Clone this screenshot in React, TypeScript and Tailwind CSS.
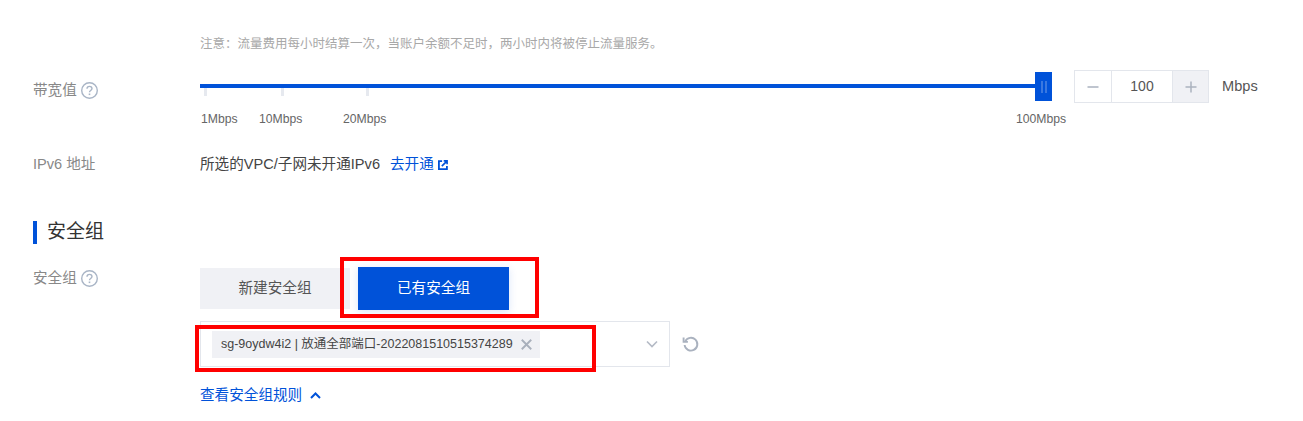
import React from "react";

const font = { fontFamily: '"Liberation Sans", "Noto Sans CJK SC", sans-serif' };

function Help() {
  return (
    <svg width="17" height="17" viewBox="0 0 17 17" fill="none" className="ml-[4px] shrink-0">
      <circle cx="8.5" cy="8.5" r="7.8" stroke="#a9b5c6" strokeWidth="1.4" />
      <path d="M6 6.8c0-1.5 1.1-2.4 2.5-2.4s2.5.9 2.5 2.2c0 1.9-2.5 1.8-2.5 3.6" stroke="#a9b5c6" strokeWidth="1.4" />
      <rect x="7.7" y="11.5" width="1.6" height="1.6" fill="#a9b5c6" />
    </svg>
  );
}

function Tick({ left }: { left: string }) {
  return <div className={`absolute top-[4px] h-[8px] w-[3px] bg-[#e6e9ef] ${left}`} />;
}

export default function App() {
  return (
    <div style={font} className="relative h-[421px] w-[1303px] overflow-hidden bg-white pl-[33px] text-[14.6px] text-[#444]">
      <div className="pl-[167px] pt-[36px] text-[12.5px] leading-[16px] text-[#a8a8a8]">
        注意：流量费用每小时结算一次，当账户余额不足时，两小时内将被停止流量服务。
      </div>

      <div className="mt-[18px] flex h-[62px]">
        <div className="flex h-[32px] w-[167px] items-center pt-[9px] text-[#888]">
          带宽值
          <Help />
        </div>
        <div className="flex items-start">
          <div className="w-[852px]">
            <div className="relative h-[32px]">
              <div className="absolute left-0 top-[14px] h-[4px] w-[843px] bg-[#0052d9]" />
              <div className="absolute left-[835px] top-[2px] flex h-[29px] w-[17px] items-center justify-center gap-[2px] bg-[#0052d9]">
                <span className="h-[12px] w-[2px] bg-[#3a78e0]" />
                <span className="h-[12px] w-[2px] bg-[#3a78e0]" />
              </div>
              <div className="absolute left-0 top-[14px] h-[12px] w-full">
                <Tick left="left-[4px]" />
                <Tick left="left-[81px]" />
                <Tick left="left-[166px]" />
              </div>
            </div>
            <div className="relative mt-[9px] h-[16px] text-[12.2px] leading-[16px] text-[#666]">
              <span className="absolute left-[1px]">1Mbps</span>
              <span className="absolute left-[59px]">10Mbps</span>
              <span className="absolute left-[143px]">20Mbps</span>
              <span className="absolute left-[816px]">100Mbps</span>
            </div>
          </div>
          <div className="ml-[22px] flex h-[33px] w-[135px] border border-[#e3e6ec] text-[14px]">
            <div className="flex w-[36px] items-center justify-center text-[#aaa]">
              <svg width="12" height="12" viewBox="0 0 12 12"><path d="M0.5 6h11" stroke="#aab2bf" strokeWidth="1.5" /></svg>
            </div>
            <div className="flex w-[62px] items-center justify-center border-x border-[#e3e6ec] text-[#555]">100</div>
            <div className="flex flex-1 items-center justify-center bg-[#f0f1f5]">
              <svg width="12" height="12" viewBox="0 0 12 12"><path d="M0.5 6h11M6 .5v11" stroke="#aab2bf" strokeWidth="1.5" /></svg>
            </div>
          </div>
          <div className="ml-[13px] flex h-[33px] items-center text-[#555]">Mbps</div>
        </div>
      </div>

      <div className="mt-[23px] flex h-[20px] items-center">
        <div className="w-[167px] text-[#888]">IPv6 地址</div>
        <div className="flex items-center text-[#444]">
          所选的VPC/子网未开通IPv6
          <span className="ml-[10px] text-[#0052d9]">去开通</span>
          <svg width="10" height="10" viewBox="0 0 11 11" fill="none" className="ml-[4px]">
            <path d="M4.5 1.2H1v8.8h8.8V6.5" stroke="#0052d9" strokeWidth="2" />
            <path d="M4.2 6.8 9.5 1.5M6.3 1h3.7v3.7" stroke="#0052d9" strokeWidth="1.8" />
          </svg>
        </div>
      </div>

      <div className="mt-[46px] flex h-[23px] items-center">
        <div className="h-[23px] w-[4px] bg-[#0052d9]" />
        <div className="ml-[10px] text-[19px] text-[#333]">安全组</div>
      </div>

      <div className="mt-[23px] flex">
        <div className="flex h-[20px] w-[167px] items-center pt-[3px] text-[#888]">
          安全组
          <Help />
        </div>
        <div>
          <div className="flex h-[43px] items-center">
            <div className="flex h-[41px] w-[150px] items-center justify-center bg-[#f0f1f5] text-[#555]">新建安全组</div>
            <div className="ml-[8px] flex h-[43px] w-[151px] items-center justify-center bg-[#0052d9] text-white shadow-[0_2px_8px_rgba(0,82,217,0.15)]">已有安全组</div>
          </div>
          <div className="mt-[11px] flex items-center">
            <div className="flex h-[46px] w-[470px] items-center border border-[#e3e6ec] pl-[11px] pr-[10px]">
              <div className="flex h-[27px] w-[328px] items-center whitespace-nowrap bg-[#f0f1f5] pl-[9px] text-[12.5px] text-[#444]">
                sg-9oydw4i2 | 放通全部端口-2022081510515374289
                <svg width="11" height="11" viewBox="0 0 10 10" className="ml-[8px]">
                  <path d="M.7.7l8.6 8.6M9.3.7.7 9.3" stroke="#a9b0bc" strokeWidth="1.7" />
                </svg>
              </div>
              <svg width="12" height="8" viewBox="0 0 12 8" fill="none" className="ml-auto mr-[1px]">
                <path d="M1 1.5l5 5 5-5" stroke="#b5bbc6" strokeWidth="1.7" />
              </svg>
            </div>
            <svg width="18" height="18" viewBox="0 0 18 18" fill="none" className="ml-[12px]">
              <path d="M3.2 6.4A6.4 6.4 0 1 1 2.6 10" stroke="#aab2bf" strokeWidth="1.9" />
              <path d="M1.6 2.6v4.3h4.3" stroke="#aab2bf" strokeWidth="1.9" />
            </svg>
          </div>
          <div className="mt-[19px] flex h-[20px] items-center text-[#0052d9]">
            查看安全组规则
            <svg width="11" height="8" viewBox="0 0 11 8" fill="none" className="ml-[8px]">
              <path d="M1 6l4.5-4.5L10 6" stroke="#0052d9" strokeWidth="2" />
            </svg>
          </div>
        </div>
      </div>

      {/* red annotation boxes drawn over the screenshot */}
      <div className="absolute left-[340px] top-[257px] h-[61px] w-[199px] border-[4px] border-[#ff0000]" />
      <div className="absolute left-[195px] top-[325px] h-[47px] w-[401px] border-[4px] border-[#ff0000]" />
    </div>
  );
}
